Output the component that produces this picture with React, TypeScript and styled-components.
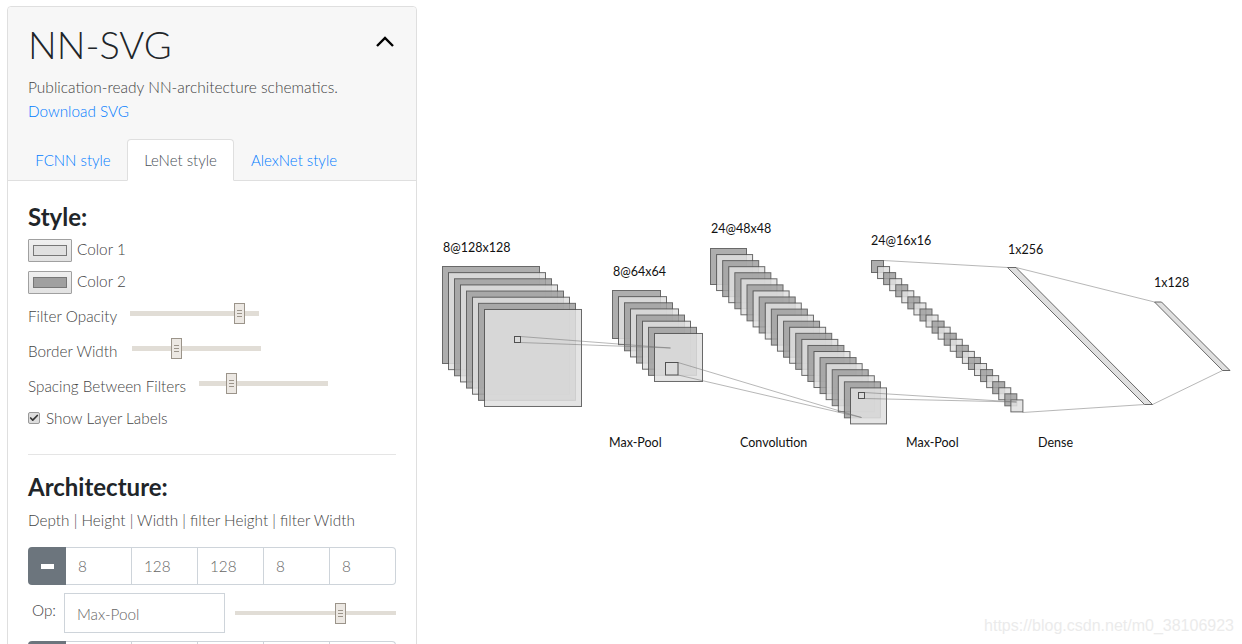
import React from "react";
import styled, { createGlobalStyle } from "styled-components";
import { Check } from "lucide-react";

const FONT = `"Lato", "Open Sans", "Liberation Sans", sans-serif`;

const Global = createGlobalStyle`
  html, body { margin: 0; padding: 0; height: 644px; overflow: hidden; background: #fff; }
  body { font-family: ${FONT}; font-weight: 300; font-size: 15.3px; color: #212529; }
  * { box-sizing: border-box; }
`;

const Page = styled.div`
  position: relative;
  display: flex;
  align-items: flex-start;
  width: 1242px;
  height: 644px;
  padding: 6px 0 0 7px;
  overflow: hidden;
`;
const Card = styled.section`
  flex: 0 0 410px;
  border: 1px solid #dfdfdf;
  border-radius: 4px;
  background: #fff;
`;
const CardHeader = styled.header`
  background: #f7f7f7;
  border-bottom: 1px solid #dfdfdf;
  border-radius: 4px 4px 0 0;
  padding: 13px 0 0 20px;
  height: 174px;
`;
const TitleRow = styled.div`
  display: flex;
  align-items: center;
  justify-content: space-between;
  padding-right: 21px;
  height: 48px;
`;
const Title = styled.h1`
  margin: 0;
  font-size: 38px;
  font-weight: 300;
  line-height: 48px;
  color: #212529;
`;
const Chevron = styled.svg`
  margin-bottom: 6px;
`;
const Tagline = styled.p`
  margin: 7px 0 0;
  font-size: 15.5px;
  line-height: 24px;
  color: #444;
`;
const DownloadLink = styled.a`
  display: block;
  line-height: 24px;
  color: #007bff;
`;
const Tabs = styled.nav`
  display: flex;
  margin: 16px 0 0 -9px;
`;
const Tab = styled.a<{ $active?: boolean; $w: number }>`
  width: ${(p) => p.$w}px;
  height: 42px;
  font-size: 15px;
  line-height: 40px;
  text-align: center;
  border: 1px solid ${(p) => (p.$active ? "#dfdfdf" : "transparent")};
  border-bottom-color: ${(p) => (p.$active ? "#fff" : "transparent")};
  border-radius: 4px 4px 0 0;
  background: ${(p) => (p.$active ? "#fff" : "transparent")};
  color: ${(p) => (p.$active ? "#495057" : "#007bff")};
`;
const CardBody = styled.div`
  padding: 21px 20px 0;
`;
const Heading = styled.h2`
  margin: 0;
  font-size: 24px;
  font-weight: 700;
  line-height: 29px;
  color: #212529;
`;
const ColorRow = styled.div`
  display: flex;
  align-items: center;
  gap: 5px;
  height: 23px;
  margin-top: 9px;
  color: #444;
  &:first-of-type {
    margin-top: 8px;
  }
`;
const ColorName = styled.span`
  padding-bottom: 3px;
`;
const Swatch = styled.span<{ $fill: string }>`
  display: flex;
  width: 44px;
  height: 23px;
  padding: 5px 4px;
  border: 1px solid #a0a0a0;
  border-radius: 1px;
  background: linear-gradient(#f0f0f0, #e2e2e2);
  &::after {
    content: "";
    flex: 1;
    background: ${(p) => p.$fill};
    border: 1px solid #777;
  }
`;
const SliderRow = styled.div`
  display: flex;
  align-items: center;
  height: 35px;
  color: #444;
  ${ColorRow} + & {
    margin-top: 2px;
  }
`;
const SliderLabel = styled.span<{ $w: number }>`
  width: ${(p) => p.$w}px;
  padding-top: 5px;
  white-space: nowrap;
`;
const Track = styled.div<{ $w: number }>`
  position: relative;
  flex: 0 0 ${(p) => p.$w}px;
  height: 4.5px;
  background: #e1ddd6;
`;
const Handle = styled.span<{ $left: number }>`
  position: absolute;
  left: ${(p) => p.$left}px;
  top: -8px;
  width: 11px;
  height: 21px;
  display: flex;
  flex-direction: column;
  justify-content: center;
  gap: 2px;
  padding: 0 2px;
  background: #ece8e3;
  border: 1px solid #9b948a;
  i {
    display: block;
    height: 1px;
    background: #9b948a;
  }
`;
const CheckRow = styled.label`
  display: flex;
  align-items: center;
  gap: 6px;
  height: 24px;
  margin-top: 5px;
  color: #444;
`;
const CheckBox = styled.span`
  display: flex;
  align-items: center;
  justify-content: center;
  width: 12px;
  height: 12px;
  border: 1px solid #999;
  border-radius: 2px;
  background: #ddd;
  color: #333;
`;
const Divider = styled.hr`
  border: 0;
  border-top: 1px solid #e5e5e5;
  margin: 24px 0 17px;
`;
const Hint = styled.p`
  margin: 7px 0 0;
  line-height: 24px;
  color: #444;
`;
const InputGroup = styled.div`
  display: flex;
  height: 38px;
  margin-top: 15px;
`;
const MinusButton = styled.button`
  flex: 0 0 38px;
  display: flex;
  align-items: center;
  justify-content: center;
  padding: 0;
  border: 0;
  border-radius: 4px 0 0 4px;
  background: #6c757d;
  &::after {
    content: "";
    width: 13px;
    height: 5px;
    background: #fff;
  }
`;
const NumberCell = styled.div`
  flex: 1;
  display: flex;
  align-items: center;
  padding: 0 12px;
  border: 1px solid #ced4da;
  border-left: 0;
  color: #666;
  &:last-child {
    border-radius: 0 4px 4px 0;
  }
`;
const OpRow = styled.div`
  display: flex;
  align-items: center;
  height: 40px;
  margin-top: 8px;
  & + ${InputGroup} {
    margin-top: 8px;
  }
`;
const OpLabel = styled.span`
  width: 36px;
  padding: 0 0 7px 4px;
  color: #444;
`;
const OpInput = styled.div`
  flex: 0 0 161px;
  height: 40px;
  line-height: 40px;
  padding-left: 12px;
  border: 1px solid #ced4da;
  color: #666;
  margin-right: 10px;
`;
const Canvas = styled.svg`
  flex: 0 0 825px;
  height: 644px;
  margin-top: -6px;
  overflow: visible;
`;
const DiagramLabel = styled.text`
  font-family: ${FONT};
  font-size: 12.5px;
  font-weight: 400;
  fill: #111;
`;
const Watermark = styled.span`
  position: absolute;
  right: 8px;
  top: 617px;
  font-family: "Liberation Sans", sans-serif;
  font-size: 16px;
  font-weight: 400;
  color: #ebebeb;
`;

const Slider = ({ w, left }: { w: number; left: number }) => (
  <Track $w={w}>
    <Handle $left={left}>
      <i />
      <i />
      <i />
    </Handle>
  </Track>
);

const Layers = [
  { x: 442.5, y: 266.5, n: 8, size: 97, dx: 6, dy: 6.14 },
  { x: 612.5, y: 290.5, n: 8, size: 48, dx: 6, dy: 6.14 },
  { x: 710.5, y: 248.5, n: 24, size: 36, dx: 6.087, dy: 6.06 },
  { x: 871.5, y: 260.5, n: 24, size: 12, dx: 6.06, dy: 6.06 },
];
const Kernels = [
  { x: 514.5, y: 336.5, s: 6, tx: 670.5, ty: 348 },
  { x: 665.5, y: 362.5, s: 12.5, tx: 861.5, ty: 417.5 },
  { x: 858.5, y: 392.5, s: 6, tx: 1016.5, ty: 402 },
];
const Labels = [
  { x: 443, y: 252, t: "8@128x128" },
  { x: 613, y: 276, t: "8@64x64" },
  { x: 711, y: 233, t: "24@48x48" },
  { x: 871, y: 245, t: "24@16x16" },
  { x: 1008, y: 254, t: "1x256" },
  { x: 1154, y: 287, t: "1x128" },
  { x: 609, y: 447, t: "Max-Pool" },
  { x: 740, y: 447, t: "Convolution" },
  { x: 906, y: 447, t: "Max-Pool" },
  { x: 1038, y: 447, t: "Dense" },
];
const Connectors = [
  [883.5, 260.5, 1007.5, 267.5],
  [1022.5, 412.5, 1144.5, 404.5],
  [1016, 267.5, 1154.5, 302],
  [1152.5, 404.5, 1222.5, 370.5],
];

const Diagram = () => (
  <Canvas viewBox="417 0 825 644" aria-label="LeNet architecture diagram">
    {Layers.map((l, li) =>
      Array.from({ length: l.n }, (_, i) => (
        <rect
          key={`${li}-${i}`}
          x={l.x + i * l.dx}
          y={l.y + i * l.dy}
          width={l.size}
          height={l.size}
          fill={i % 2 === 0 ? "#a0a0a0" : "#e0e0e0"}
          stroke="#505050"
          opacity={0.85}
        />
      ))
    )}
    {Kernels.map((k, i) => (
      <g key={i}>
        <line x1={k.x + k.s} y1={k.y} x2={k.tx} y2={k.ty} stroke="#707070" strokeOpacity={0.5} />
        <line x1={k.x + k.s} y1={k.y + k.s} x2={k.tx} y2={k.ty} stroke="#707070" strokeOpacity={0.5} />
        <rect x={k.x} y={k.y} width={k.s} height={k.s} fill="#e0e0e0" fillOpacity={0.5} stroke="#505050" />
      </g>
    ))}
    {Connectors.map(([x1, y1, x2, y2], i) => (
      <line key={i} x1={x1} y1={y1} x2={x2} y2={y2} stroke="#707070" strokeOpacity={0.5} />
    ))}
    <polygon points="1007.5,267.5 1016,267.5 1152.5,404.5 1144.5,404.5" fill="#e0e0e0" stroke="#505050" strokeOpacity={0.85} />
    <polygon points="1154.5,302 1161.5,302 1230,370.5 1222.5,370.5" fill="#e0e0e0" stroke="#505050" strokeOpacity={0.85} />
    {Labels.map((l, i) => (
      <DiagramLabel key={i} x={l.x} y={l.y}>
        {l.t}
      </DiagramLabel>
    ))}
  </Canvas>
);

const Row = ({ vals }: { vals: string[] }) => (
  <InputGroup>
    <MinusButton aria-label="Remove layer" />
    {vals.map((v, i) => (
      <NumberCell key={i}>{v}</NumberCell>
    ))}
  </InputGroup>
);

export default function App() {
  return (
    <Page>
      <Global />
      <Card>
        <CardHeader>
          <TitleRow>
            <Title>NN-SVG</Title>
            <Chevron width="20" height="12" viewBox="0 0 20 12" fill="none" stroke="#000" strokeWidth="2.4">
              <path d="M2 11 L10 3 L18 11" />
            </Chevron>
          </TitleRow>
          <Tagline>Publication-ready NN-architecture schematics.</Tagline>
          <DownloadLink>Download SVG</DownloadLink>
          <Tabs>
            <Tab $w={108}>FCNN style</Tab>
            <Tab $w={107} $active>LeNet style</Tab>
            <Tab $w={120}>AlexNet style</Tab>
          </Tabs>
        </CardHeader>
        <CardBody>
          <Heading>Style:</Heading>
          <ColorRow><Swatch $fill="#e0e0e0" /><ColorName>Color 1</ColorName></ColorRow>
          <ColorRow><Swatch $fill="#a0a0a0" /><ColorName>Color 2</ColorName></ColorRow>
          <SliderRow>
            <SliderLabel $w={102}>Filter Opacity</SliderLabel>
            <Slider w={129} left={104} />
          </SliderRow>
          <SliderRow>
            <SliderLabel $w={104}>Border Width</SliderLabel>
            <Slider w={129} left={39} />
          </SliderRow>
          <SliderRow>
            <SliderLabel $w={171}>Spacing Between Filters</SliderLabel>
            <Slider w={129} left={27} />
          </SliderRow>
          <CheckRow>
            <CheckBox><Check size={10} strokeWidth={4} /></CheckBox>
            Show Layer Labels
          </CheckRow>
          <Divider />
          <Heading>Architecture:</Heading>
          <Hint>Depth | Height | Width | filter Height | filter Width</Hint>
          <Row vals={["8", "128", "128", "8", "8"]} />
          <OpRow>
            <OpLabel>Op:</OpLabel>
            <OpInput>Max-Pool</OpInput>
            <Slider w={161} left={100} />
          </OpRow>
          <Row vals={["", "", "", "", ""]} />
        </CardBody>
      </Card>
      <Diagram />
      <Watermark>https://blog.csdn.net/m0_38106923</Watermark>
    </Page>
  );
}
